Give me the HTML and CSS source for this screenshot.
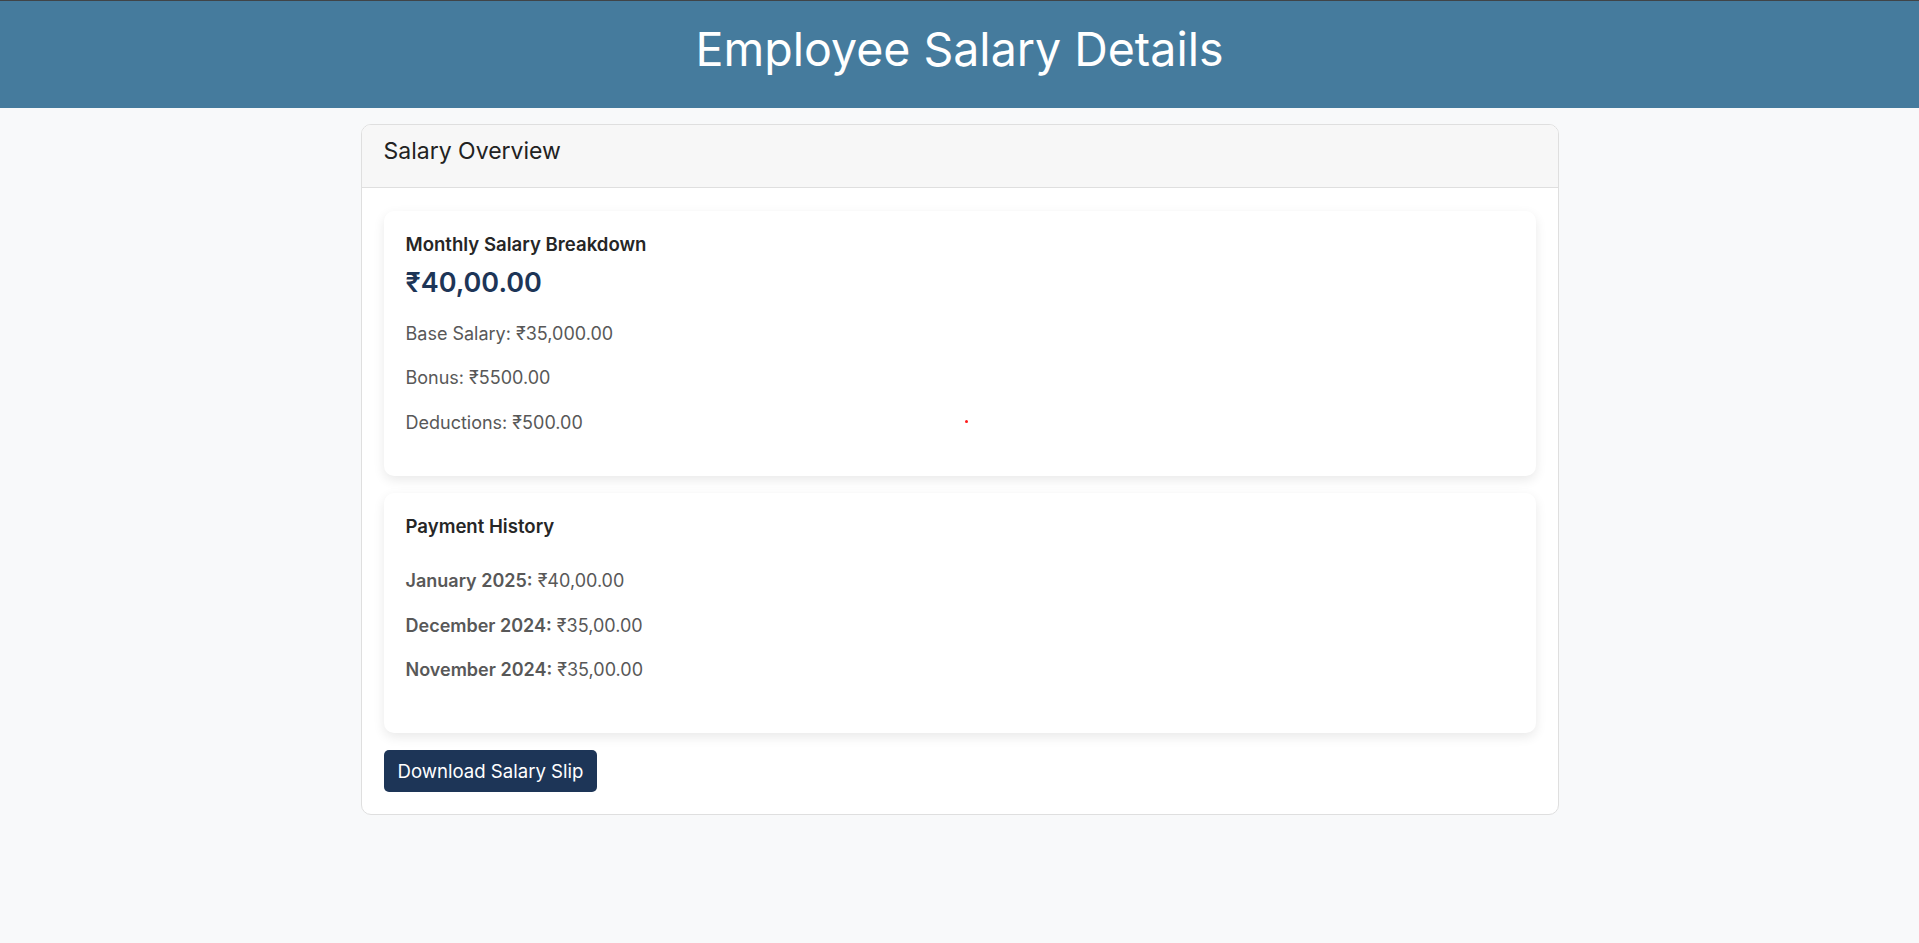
FILE: index.html
```html
<!DOCTYPE html>
<html lang="en">
<head>
<meta charset="utf-8">
<title>Employee Salary Details</title>
<link rel="stylesheet" href="styles.css">
</head>
<body>
<header class="topbar">
  <h1 class="topbar-title">Employee Salary Details</h1>
</header>
<main class="container">
  <section class="panel">
    <div class="panel-header">Salary Overview</div>
    <div class="panel-body">
      <div class="info-card">
        <h2 class="card-title">Monthly Salary Breakdown</h2>
        <div class="amount">₹40,00.00</div>
        <p class="line">Base Salary: ₹35,000.00</p>
        <p class="line">Bonus: ₹5500.00</p>
        <p class="line">Deductions: ₹500.00</p>
      </div>
      <div class="info-card">
        <h2 class="card-title">Payment History</h2>
        <ul class="history">
          <li class="line"><strong>January 2025:</strong> ₹40,00.00</li>
          <li class="line"><strong>December 2024:</strong> ₹35,00.00</li>
          <li class="line"><strong>November 2024:</strong> ₹35,00.00</li>
        </ul>
      </div>
      <button class="btn" type="button">Download Salary Slip</button>
    </div>
  </section>
</main>
<span class="cursor-dot"></span>
</body>
</html>
```
FILE: styles.css
```css
* { box-sizing: border-box; }

html, body {
  margin: 0;
  padding: 0;
}

body {
  background: #f8f9fa;
  font-family: "Inter", "DejaVu Sans", sans-serif;
  color: #555;
  position: relative;
  min-height: 943px;
}

.topbar {
  background: #457b9d;
  border-top: 1px solid #404447;
  padding: 25px 0 36px;
  text-align: center;
}

.topbar-title {
  margin: 0;
  font-size: 46.5px;
  line-height: 46px;
  font-weight: 400;
  color: #ffffff;
}

.container {
  width: 1198px;
  margin: 16px auto 0;
}

.panel {
  background: #fff;
  border: 1px solid #dfdfdf;
  border-radius: 10px;
  overflow: hidden;
}

.panel-header {
  background: #f7f7f7;
  border-bottom: 1px solid #dfdfdf;
  padding: 14px 22px 24px;
  font-size: 23px;
  line-height: 24px;
  color: #222;
}

.panel-body {
  padding: 23px 22px 22px;
}

.info-card {
  background: #fff;
  border-radius: 10px;
  box-shadow: 0 4px 12px rgba(0, 0, 0, 0.09);
  padding: 22px 22px 21px;
  margin-bottom: 17px;
}

.card-title {
  margin: 0 0 12px;
  font-size: 18.6px;
  line-height: 22px;
  font-weight: 600;
  color: #262626;
}

.amount {
  font-size: 27px;
  line-height: 32px;
  font-weight: 600;
  color: #1d3557;
  margin-bottom: 23px;
}

.line {
  margin: 0 0 20px;
  font-size: 18px;
  line-height: 24.4px;
  color: #585858;
}

.history {
  list-style: none;
  padding: 0;
  margin: 32px 0 30px;
}

.history strong {
  font-weight: 600;
}

.btn {
  display: inline-block;
  height: 42px;
  padding: 0 14px;
  border: none;
  border-radius: 5px;
  background: #1d3557;
  color: #fff;
  font-family: inherit;
  font-size: 18.6px;
  line-height: 42px;
  cursor: pointer;
}

.cursor-dot {
  position: absolute;
  left: 965px;
  top: 420px;
  width: 3px;
  height: 3px;
  border-radius: 50%;
  background: #ff1a1a;
}
```
